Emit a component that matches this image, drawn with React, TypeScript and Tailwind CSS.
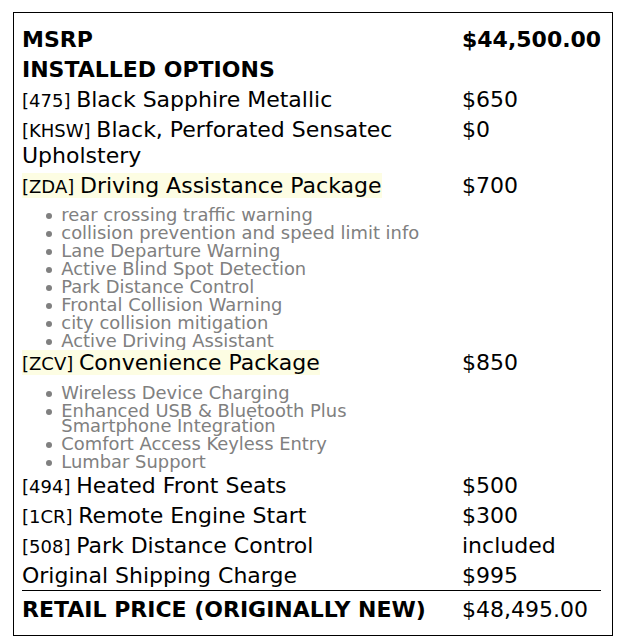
import React from "react";

function Code({ c }: { c: string }) {
  return <span className="text-[18px] leading-none">[{c}] </span>;
}

function Row({ left, right, bold }: { left: React.ReactNode; right: React.ReactNode; bold?: boolean }) {
  return (
    <div className={`flex pt-[2.5px] pb-[1.5px] text-[22px] leading-[26px] ${bold ? "font-bold" : ""}`}>
      <div className="w-[440px] shrink-0">{left}</div>
      <div className="flex-1">{right}</div>
    </div>
  );
}

function Bullets({ items, cls }: { items: string[]; cls: string }) {
  return (
    <ul className={`pl-[24px] text-[17.9px] leading-[15px] text-[#808080] ${cls}`}>
      {items.map((b) => (
        <li key={b} className="flex items-start mt-[3px]">
          <span className="mt-[6.3px] mr-[9.3px] h-[6px] w-[6px] shrink-0 rounded-full bg-[#808080]" />
          <span>{b}</span>
        </li>
      ))}
    </ul>
  );
}

export default function App() {
  const zda = [
    "rear crossing traffic warning",
    "collision prevention and speed limit info",
    "Lane Departure Warning",
    "Active Blind Spot Detection",
    "Park Distance Control",
    "Frontal Collision Warning",
    "city collision mitigation",
    "Active Driving Assistant",
  ];
  const zcv = [
    "Wireless Device Charging",
    "Enhanced USB & Bluetooth Plus Smartphone Integration",
    "Comfort Access Keyless Entry",
    "Lumbar Support",
  ];
  return (
    <div className="w-[621px] h-[642px] bg-white pt-[12px] pl-[13px] text-black font-['DejaVu_Sans',sans-serif]">
      <div className="w-[600px] border border-black pt-[11px] pb-[10px] pl-[8px]">
        <div className="w-[579px]">
          <Row bold left="MSRP" right="$44,500.00" />
          <Row bold left="INSTALLED OPTIONS" right="" />
          <Row left={<><Code c="475" />Black Sapphire Metallic</>} right="$650" />
          <Row left={<><Code c="KHSW" />Black, Perforated Sensatec Upholstery</>} right="$0" />
          <Row
            left={
              <>
                <span className="bg-[#fdfde3]">
                  <Code c="ZDA" />Driving Assistance Package
                </span>
                <Bullets items={zda} cls="mt-[8.5px] mb-[-1.7px]" />
              </>
            }
            right="$700"
          />
          <Row
            left={
              <>
                <span className="bg-[#fdfde3]">
                  <Code c="ZCV" />Convenience Package
                </span>
                <Bullets items={zcv} cls="mt-[8.5px] mb-[0.6px]" />
              </>
            }
            right="$850"
          />
          <Row left={<><Code c="494" />Heated Front Seats</>} right="$500" />
          <Row left={<><Code c="1CR" />Remote Engine Start</>} right="$300" />
          <Row left={<><Code c="508" />Park Distance Control</>} right="included" />
          <Row left="Original Shipping Charge" right="$995" />
          <div className="mt-[-1px] h-px bg-black" />
          <div className="pt-[4px]">
            <Row left={<span className="font-bold">RETAIL PRICE (ORIGINALLY NEW)</span>} right="$48,495.00" />
          </div>
        </div>
      </div>
    </div>
  );
}
